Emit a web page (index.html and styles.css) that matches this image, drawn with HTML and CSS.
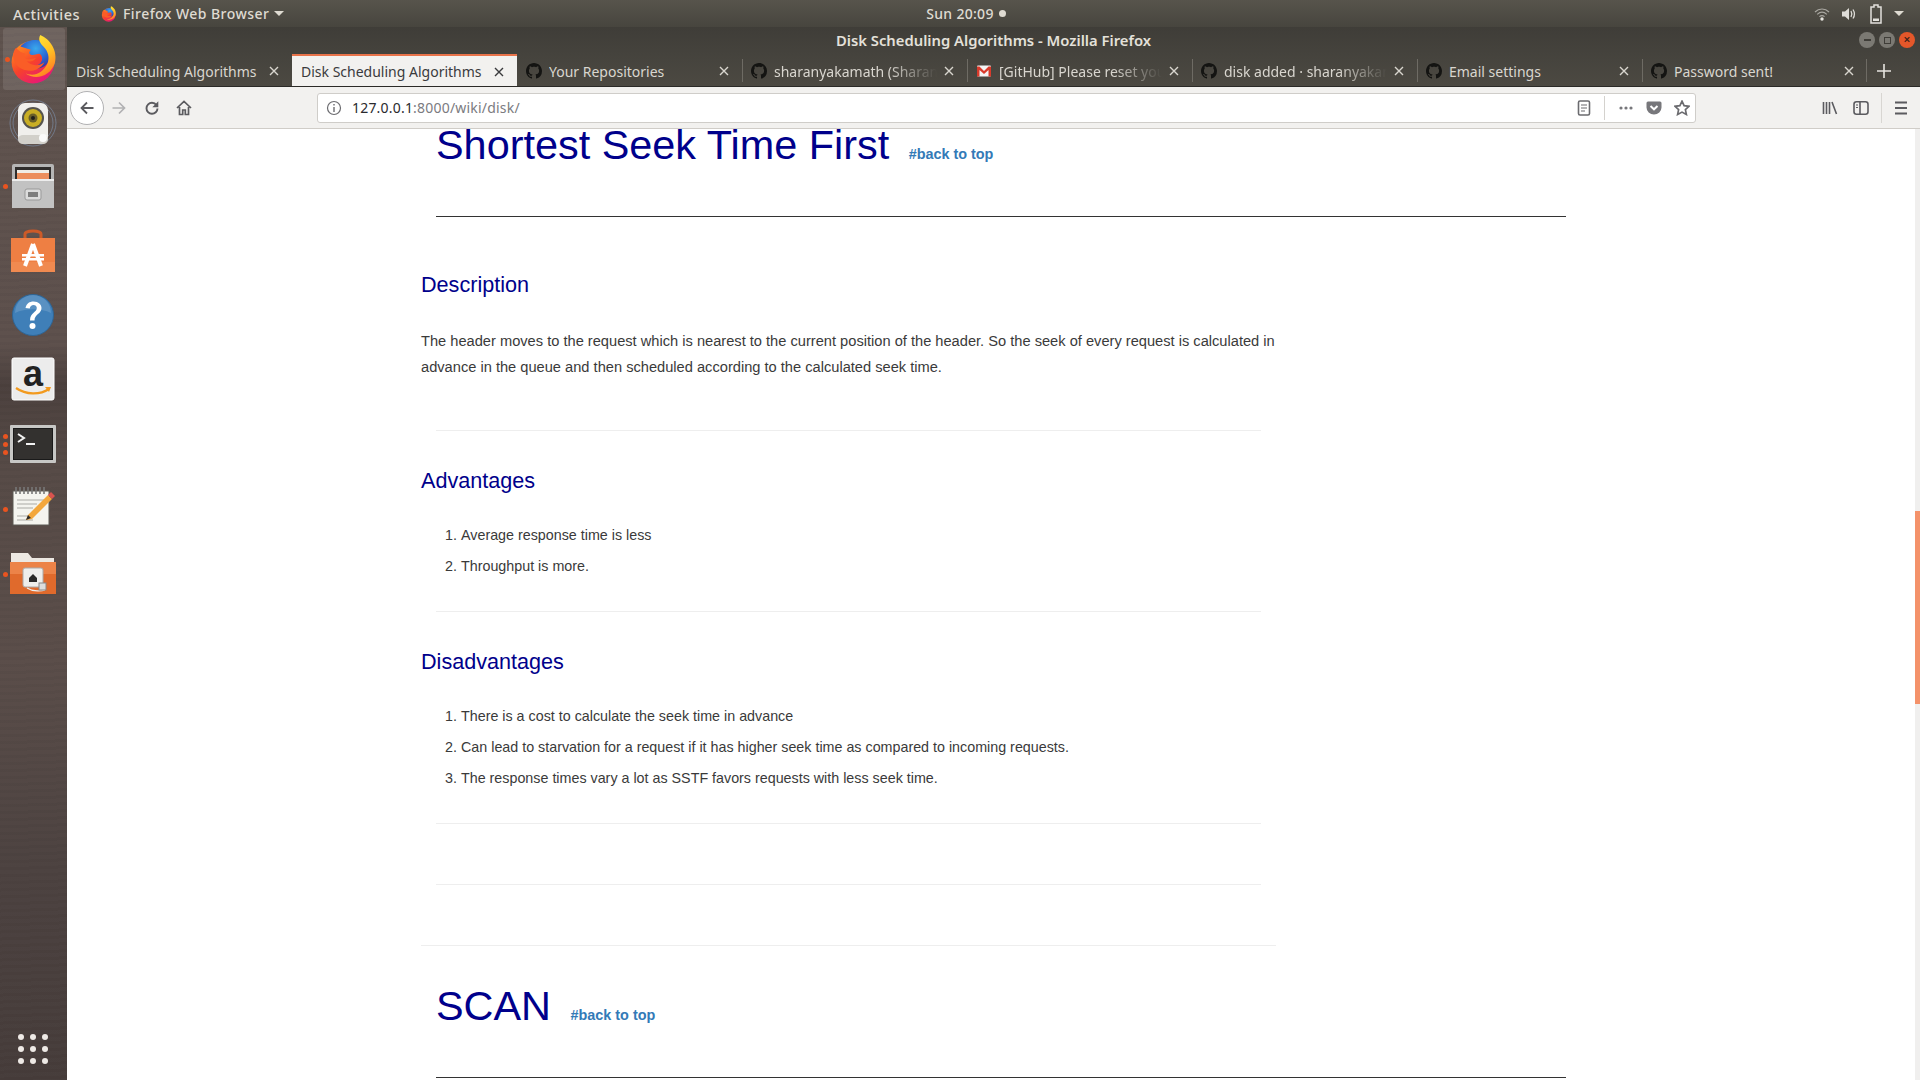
FILE: index.html
```html
<!DOCTYPE html>
<html lang="en">
<head>
<meta charset="utf-8">
<title>Disk Scheduling Algorithms</title>
<link rel="stylesheet" href="styles.css">
</head>
<body>
<svg class="defs" width="0" height="0" aria-hidden="true">
  <defs>
    <linearGradient id="ffBody" x1="0.1" y1="0.1" x2="0.7" y2="1">
      <stop offset="0" stop-color="#ff8f1f"/><stop offset="0.5" stop-color="#f7422b"/><stop offset="1" stop-color="#e6157c"/>
    </linearGradient>
    <linearGradient id="ffTail" x1="0.2" y1="0" x2="0.7" y2="1">
      <stop offset="0" stop-color="#ffea3a"/><stop offset="0.55" stop-color="#ffc025"/><stop offset="1" stop-color="#ff7a22"/>
    </linearGradient>
    <radialGradient id="ffGlobe" cx="0.5" cy="0.3" r="0.75">
      <stop offset="0" stop-color="#3aa9ec"/><stop offset="0.55" stop-color="#2a66d4"/><stop offset="1" stop-color="#3b2f9a"/>
    </radialGradient>
    <symbol id="firefox" viewBox="0 0 48 48">
      <circle cx="23" cy="27" r="20.500" fill="url(#ffBody)"/>
      <path d="M11 12c4-5 11-7 17-6 6 1 10 4 12 9 1 6-1 12-6 16-5 3-11 3-15 0 3 1 8 0 11-3 3-3 2-8-1-9-3 0-5 2-8 1-2-1-2-3 0-5l-4-1c-2-1-4-1-6-2z" fill="url(#ffGlobe)"/>
      <path d="M30 1c-2 4-1 7 3 11 5 5 6 11 4 16-3 7-9 11-15 11-2 0-4 0-6-1 10 7 24 2 28-10 3-11-4-23-14-27z" fill="url(#ffTail)"/>
      <path d="M7 13c2 4 6 5 9 6-2 2-2 4 1 5 3 1 6-1 9-1-2 3-6 4-9 3 4 5 12 5 17 1-3 6-10 9-16 8C9 34 4 27 4 21c0-3 1-6 3-8z" fill="#fa5d27"/>
    </symbol>
    <symbol id="gh" viewBox="0 0 16 16">
      <path fill="#141412" d="M8 0C3.58 0 0 3.58 0 8c0 3.54 2.29 6.53 5.47 7.59.4.07.55-.17.55-.38 0-.19-.01-.82-.01-1.49-2.01.37-2.53-.49-2.69-.94-.09-.23-.48-.94-.82-1.13-.28-.15-.68-.52-.01-.53.63-.01 1.08.58 1.23.82.72 1.21 1.87.87 2.33.66.07-.52.28-.87.51-1.07-1.78-.2-3.64-.89-3.64-3.95 0-.87.31-1.59.82-2.15-.08-.2-.36-1.02.08-2.12 0 0 .67-.21 2.2.82.64-.18 1.32-.27 2-.27.68 0 1.36.09 2 .27 1.53-1.04 2.2-.82 2.2-.82.44 1.1.16 1.92.08 2.12.51.56.82 1.27.82 2.15 0 3.07-1.87 3.75-3.65 3.95.29.25.54.73.54 1.48 0 1.07-.01 1.93-.01 2.2 0 .21.15.46.55.38A8.013 8.013 0 0016 8c0-4.42-3.58-8-8-8z"/>
    </symbol>
    <symbol id="tabx" viewBox="0 0 12 12">
      <path d="M2 2l8 8M10 2l-8 8" fill="none" stroke="currentColor" stroke-width="1.400"/>
    </symbol>
  </defs>
</svg>

<header class="topbar">
  <div class="top-left">
    <span class="activities">Activities</span>
    <span class="appmenu">
      <svg class="appicon" viewBox="0 0 48 48"><use href="#firefox"/></svg>
      Firefox Web Browser
      <span class="caret"></span>
    </span>
  </div>
  <div class="clock">Sun 20:09 <span class="clockdot"></span></div>
  <div class="tray">
    <svg class="tray-ico" viewBox="0 0 16 16"><path d="M1 6c4-4 10-4 14 0M3.200 8.400c3-2.700 6.600-2.700 9.600 0M5.400 10.600c1.600-1.300 3.600-1.300 5.200 0" fill="none" stroke="#a9a7a1" stroke-width="1.200"/><circle cx="8" cy="13" r="1.700" fill="#e6e4df"/></svg>
    <svg class="tray-ico" viewBox="0 0 16 16"><path d="M1 5.500h3L8 2v12L4 10.500H1z" fill="#dedcd7"/><path d="M10 5c1 1.800 1 4.200 0 6M12 3.500c1.800 2.800 1.800 6.200 0 9" fill="none" stroke="#dedcd7" stroke-width="1.300"/></svg>
    <svg class="tray-ico" viewBox="0 0 16 20"><path d="M6 1h4v2h3v16H3V3h3z" fill="none" stroke="#e2e0db" stroke-width="1.500"/><rect x="5" y="14.500" width="6" height="2.500" fill="#e2e0db"/></svg>
    <span class="caret tray-caret"></span>
  </div>
</header>

<div class="desktop">
  <nav class="dock">
    <div class="dock-item active"><span class="dots"><i></i></span>
      <svg class="dock-ico ff" viewBox="0 0 48 48"><use href="#firefox"/></svg></div>
    <div class="dock-item rhythm">
      <svg class="dock-ico" viewBox="0 0 48 48">
        <g fill="none" stroke="#7f94b0" stroke-opacity=".6"><circle cx="24" cy="24" r="23"/><circle cx="24" cy="24" r="20"/></g>
        <rect x="9" y="4" width="30" height="41" rx="7" fill="#f0efec"/>
        <rect x="9" y="36" width="30" height="9" rx="5" fill="#d2d0ca"/>
        <circle cx="24" cy="19" r="11" fill="#55534e"/><circle cx="24" cy="19" r="9" fill="#c9ae24"/><circle cx="24" cy="19" r="4.500" fill="#6a5f28"/><circle cx="24" cy="19" r="2" fill="#201f1b"/>
        <circle cx="34" cy="39" r="4" fill="#fafafa"/>
      </svg></div>
    <div class="dock-item files"><span class="dots"><i></i></span>
      <svg class="dock-ico" viewBox="0 0 48 48">
        <rect x="3" y="2" width="42" height="44" rx="2" fill="#b5b5b5"/>
        <rect x="6" y="5" width="36" height="15" fill="#2f2d2c"/>
        <rect x="8" y="8" width="32" height="9" fill="#f0ede6"/><rect x="8" y="11" width="32" height="6" fill="#ec8e5c"/>
        <rect x="3" y="17" width="42" height="29" fill="#c2c2c2"/><rect x="3" y="17" width="42" height="2" fill="#ededed"/>
        <rect x="16" y="27" width="16" height="11" rx="2" fill="#dcdcdc" stroke="#999"/><rect x="19" y="30" width="10" height="5" fill="#7e7e7e"/>
      </svg></div>
    <div class="dock-item soft">
      <svg class="dock-ico" viewBox="0 0 48 48">
        <path d="M16 13v-5c0-4 16-4 16 0v5" fill="none" stroke="#cc5a28" stroke-width="3"/>
        <path d="M2 12h44v34H2z" fill="#ee7f43"/><path d="M2 36h44v10H2z" fill="#f08a50"/>
        <path d="M24 18l-8 22M24 18l8 22" fill="none" stroke="#fff" stroke-width="4"/><path d="M13 28h22v2.500H13zM13 32h22v2.500H13z" fill="#fff"/>
      </svg></div>
    <div class="dock-item help">
      <svg class="dock-ico" viewBox="0 0 48 48">
        <circle cx="24" cy="24" r="20.500" fill="#3f7fb8" stroke="#2f6595"/><path d="M6 22a18 18 0 0136 0c-10-5-26-5-36 0z" fill="#fff" opacity=".14"/>
        <path d="M16.500 17c1-4.500 4-6.500 8-6.500 5 0 8 3 8 6.500 0 6-7 6-7 12.500h-4.500c0-8 6.800-8 6.800-12.500 0-1.800-1.500-3-3.300-3-2 0-3.300 1.200-3.800 3.500z" fill="#fff"/><circle cx="23.500" cy="35" r="3" fill="#fff"/>
      </svg></div>
    <div class="dock-item amazon">
      <svg class="dock-ico" viewBox="0 0 48 48">
        <rect x="3" y="2" width="42" height="42" rx="2" fill="#ececec" stroke="#fff"/>
        <text class="amz" x="24" y="30" text-anchor="middle">a</text>
        <path d="M7 32c10 7 24 7 33 1" fill="none" stroke="#f29a1f" stroke-width="2.200"/><path d="M36 31l6 0-2 5z" fill="#f29a1f"/>
      </svg></div>
    <div class="dock-item term"><span class="dots"><i></i><i></i><i></i></span>
      <svg class="dock-ico" viewBox="0 0 48 48">
        <rect x="1" y="4" width="46" height="38" rx="1" fill="#c7c7c5"/><rect x="4" y="7" width="40" height="32" fill="#1a1a1a"/><rect x="5" y="8" width="38" height="30" fill="#33312f"/>
        <path d="M9 13l6 4-6 4" fill="none" stroke="#f2f2f2" stroke-width="2"/><rect x="17" y="22" width="9" height="2" fill="#f2f2f2"/>
      </svg></div>
    <div class="dock-item editor"><span class="dots"><i></i></span>
      <svg class="dock-ico" viewBox="0 0 48 48">
        <rect x="4" y="7" width="36" height="34" fill="#f4f4ef" stroke="#5c5a55"/>
        <path d="M7 3v7M11 3v7M15 3v7M19 3v7M23 3v7M27 3v7M31 3v7M35 3v7" stroke="#777" stroke-width="1.600"/>
        <path d="M8 16h28M8 20h20M8 24h16M8 32h12M8 36h16" stroke="#a9a9a5" stroke-width="1.200"/>
        <path d="M17 36l2-5 20-20 4 4-20 20z" fill="#f3a73c"/><path d="M39 11l3-3 4 4-3 3z" fill="#d9534f"/><path d="M17 36l2-5 3 3z" fill="#2a2a2a"/>
      </svg></div>
    <div class="dock-item folder"><span class="dots"><i></i></span>
      <svg class="dock-ico" viewBox="0 0 48 48">
        <path d="M2 3h17l4 5h22v6H2z" fill="#ece8e2"/>
        <path d="M1 12h46v32H1z" fill="#e06a2c"/><path d="M1 12h46v12H1z" fill="#ec8348"/>
        <rect x="14" y="18" width="20" height="19" rx="2" fill="#eeeeec" stroke="#aaa"/><path d="M20 28l4-4 4 4v4h-8z" fill="#2a2a2a"/>
        <path d="M18 38c6 4 15 3 18 2" fill="none" stroke="#eee" stroke-width="1.200"/><rect x="30" y="33" width="7" height="7" fill="#ddd" stroke="#888"/>
      </svg></div>
    <div class="dock-grid"><i></i><i></i><i></i><i></i><i></i><i></i><i></i><i></i><i></i></div>
  </nav>

  <div class="window">
    <div class="titlebar">
      <span class="wintitle">Disk Scheduling Algorithms - Mozilla Firefox</span>
      <div class="winctl">
        <span class="wbtn"><i class="w-min"></i></span>
        <span class="wbtn"><i class="w-max"></i></span>
        <span class="wbtn close">×</span>
      </div>
    </div>

    <div class="tabstrip">
      <div class="tab first"><span class="tab-title">Disk Scheduling Algorithms</span><svg class="tab-x"><use href="#tabx"/></svg></div>
      <div class="tab current"><span class="tab-title">Disk Scheduling Algorithms</span><svg class="tab-x"><use href="#tabx"/></svg></div>
      <div class="tab"><svg class="fav"><use href="#gh"/></svg><span class="tab-title">Your Repositories</span><svg class="tab-x"><use href="#tabx"/></svg></div>
      <div class="tab sep"><svg class="fav"><use href="#gh"/></svg><span class="tab-title fade">sharanyakamath (Sharanya Kamath)</span><svg class="tab-x"><use href="#tabx"/></svg></div>
      <div class="tab sep"><svg class="fav" viewBox="0 0 16 16"><rect x="1" y="2.500" width="14" height="11" rx="1" fill="#f4f4f4"/><path d="M1 3.500h2.500L8 8l4.500-4.500H15v10h-2.500V7L8 11 3.500 7v6.500H1z" fill="#d93a2b"/></svg><span class="tab-title fade">[GitHub] Please reset your password</span><svg class="tab-x"><use href="#tabx"/></svg></div>
      <div class="tab sep"><svg class="fav"><use href="#gh"/></svg><span class="tab-title fade">disk added · sharanyakamath/Disk</span><svg class="tab-x"><use href="#tabx"/></svg></div>
      <div class="tab sep"><svg class="fav"><use href="#gh"/></svg><span class="tab-title">Email settings</span><svg class="tab-x"><use href="#tabx"/></svg></div>
      <div class="tab sep last"><svg class="fav"><use href="#gh"/></svg><span class="tab-title">Password sent!</span><svg class="tab-x"><use href="#tabx"/></svg></div>
      <svg class="newtab" viewBox="0 0 16 16"><path d="M8 1v14M1 8h14" stroke="#e6e4df" stroke-width="1.600"/></svg>
    </div>

    <div class="navbar">
      <span class="backbtn"><svg viewBox="0 0 16 16" class="nav16"><path d="M14.500 8H2.500M8 2.500L2.500 8 8 13.500" fill="none" stroke="#5b5b5f" stroke-width="1.800"/></svg></span>
      <svg viewBox="0 0 16 16" class="nav16 fwd"><path d="M1.500 8h12M8 2.500L13.500 8 8 13.500" fill="none" stroke="#b1b1b3" stroke-width="1.700"/></svg>
      <svg viewBox="0 0 16 16" class="nav16 reload"><path d="M13.500 8.500A5.500 5.500 0 118 2.800c2 0 3.500 1 4.500 2.500" fill="none" stroke="#5b5b5f" stroke-width="1.900"/><path d="M14.300 1.200v6h-6z" fill="#5b5b5f"/></svg>
      <svg viewBox="0 0 16 16" class="nav16 home"><path d="M1 8l7-6.500L15 8M3.500 7v7.500h3.200V10h2.600v4.500h3.200V7" fill="none" stroke="#5b5b5f" stroke-width="1.700"/></svg>
      <div class="urlbar">
        <svg viewBox="0 0 16 16" class="nav14"><circle cx="8" cy="8" r="6.500" fill="none" stroke="#6b6b6f" stroke-width="1.200"/><rect x="7.300" y="7" width="1.400" height="5" fill="#6b6b6f"/><rect x="7.300" y="4" width="1.400" height="1.500" fill="#6b6b6f"/></svg>
        <span class="url"><b>127.0.0.1</b>:8000/wiki/disk/</span>
        <svg viewBox="0 0 16 16" class="nav16 reader"><rect x="2.500" y="1" width="11" height="14" rx="1.500" fill="none" stroke="#6b6b6f" stroke-width="1.600"/><path d="M5 5h6M5 8h6M5 11h4" stroke="#6b6b6f" stroke-width="1.200"/></svg>
        <span class="urlsep"></span>
        <svg viewBox="0 0 16 16" class="nav16 more"><circle cx="3" cy="8" r="1.600" fill="#77777b"/><circle cx="8" cy="8" r="1.600" fill="#77777b"/><circle cx="13" cy="8" r="1.600" fill="#77777b"/></svg>
        <svg viewBox="0 0 16 16" class="nav16 pocket"><path d="M2 1.500h12a1.500 1.500 0 011.500 1.500v4.500a7.500 7 0 01-15 0V3A1.500 1.500 0 012 1.500z" fill="#77777b"/><path d="M4.500 6L8 9.300 11.500 6" fill="none" stroke="#fff" stroke-width="2"/></svg>
        <svg viewBox="0 0 16 16" class="nav16 star"><path d="M8 1.200l2.100 4.500 4.900.6-3.600 3.300 1 4.900L8 12.100l-4.400 2.400 1-4.900L1 6.300l4.900-.6z" fill="none" stroke="#6b6b6f" stroke-width="1.700"/></svg>
      </div>
      <svg viewBox="0 0 16 16" class="nav16 library"><path d="M1.500 2v12M4.500 2v12M7.500 2v12M10 2l4.500 12" fill="none" stroke="#5b5b5f" stroke-width="1.600"/></svg>
      <svg viewBox="0 0 16 16" class="nav16 sidebar"><rect x="1" y="1.800" width="14" height="12.400" rx="2.500" fill="none" stroke="#5b5b5f" stroke-width="1.600"/><path d="M7 2v12" stroke="#5b5b5f" stroke-width="1.600"/><path d="M3 5h2M3 7.500h2" stroke="#5b5b5f"/></svg>
      <span class="navsep"></span>
      <svg viewBox="0 0 16 16" class="nav16 burger"><path d="M2 2.500h12M2 8h12M2 13.500h12" stroke="#5b5b5f" stroke-width="1.900"/></svg>
    </div>

    <main class="page">
      <article class="article">
        <div class="algo-head first-head">
          <h1 class="algo-title">Shortest Seek Time First <a class="top-link">#back to top</a></h1>
          <hr class="rule-dark">
        </div>

        <h3 class="sub sub-desc">Description</h3>
        <p class="desc">The header moves to the request which is nearest to the current position of the header. So the seek of every request is calculated in advance in the queue and then scheduled according to the calculated seek time.</p>
        <hr class="rule-in r1">

        <h3 class="sub">Advantages</h3>
        <ol class="points">
          <li>Average response time is less</li>
          <li>Throughput is more.</li>
        </ol>
        <hr class="rule-in r2">

        <h3 class="sub">Disadvantages</h3>
        <ol class="points">
          <li>There is a cost to calculate the seek time in advance</li>
          <li>Can lead to starvation for a request if it has higher seek time as compared to incoming requests.</li>
          <li>The response times vary a lot as SSTF favors requests with less seek time.</li>
        </ol>
        <hr class="rule-in r3">
        <hr class="rule-in r4">
        <hr class="rule-out">

        <div class="algo-head scan-head">
          <h1 class="algo-title">SCAN <a class="top-link">#back to top</a></h1>
          <hr class="rule-dark">
        </div>
      </article>
      <div class="scrolltrack"><div class="scrollthumb"></div></div>
    </main>
  </div>
</div>
</body>
</html>
```
FILE: styles.css
```css
* { box-sizing: border-box; }
html, body { margin: 0; height: 100%; overflow: hidden; }
body { display: flex; flex-direction: column; width: 1920px; height: 1080px; font-family: "Noto Sans", sans-serif; background: #fff; }
.defs { position: absolute; }

/* GNOME top bar */
.topbar { height: 27px; flex: none; display: grid; grid-template-columns: 1fr auto 1fr; align-items: center; background: linear-gradient(#57544c, #47453e); color: #dfdbd2; font-size: 14px; font-weight: 500; }
.top-left { display: flex; align-items: center; }
.activities { margin-left: 13px; font-size: 14.500px; letter-spacing: .45px; }
.appmenu { display: flex; align-items: center; margin-left: 21px; letter-spacing: .45px; }
.appicon { width: 16px; height: 16px; margin-right: 6px; }
.caret { display: inline-block; width: 0; height: 0; border: 5px solid transparent; border-top: 5px solid #dfdbd2; border-bottom: 0; margin-left: 5px; }
.clock { display: flex; align-items: center; gap: 5px; font-size: 14px; margin-left: 12px; letter-spacing: .3px; }
.clockdot { width: 7px; height: 7px; border-radius: 50%; background: #dfdbd2; }
.tray { display: flex; align-items: center; justify-content: flex-end; padding-right: 16px; }
.tray-ico { width: 16px; height: 16px; margin-right: 11px; position: relative; left: 3px; }
.tray-ico:nth-child(3) { height: 20px; margin-right: 7px; }
.tray-caret { margin-left: 6px; }

.desktop { flex: 1; display: flex; min-height: 0; }

/* Ubuntu dock */
.dock { width: 67px; flex: none; display: flex; flex-direction: column; align-items: center; padding-right: 1px; background:
  repeating-linear-gradient(178deg, rgba(0,0,0,.018) 0 3px, rgba(255,255,255,.008) 3px 7px),
  linear-gradient(#5f534e 0, #5d504c 30%, #4b403d 34%, #564a46 42%, #5a4d49 60%, #4c4240 80%, #463c3a 100%); position: relative; }
.dock-item { width: 66px; height: 64.700px; flex: none; display: flex; align-items: center; justify-content: center; position: relative; }
.dock-item.active { background: rgba(255,255,255,.1); width: 62px; height: 62px; margin-top: 1px; margin-bottom: -1px; margin-left: 1px; border-radius: 3px; }
.dock-ico { width: 48px; height: 48px; }
.dock-ico.ff { width: 50px; height: 50px; }
.rhythm .dock-ico { margin-top: 4px; }
.soft .dock-ico { margin-top: -2px; }
.editor .dock-ico { margin-top: -2px; }
.dots { position: absolute; left: 3px; top: 0; bottom: 0; display: flex; flex-direction: column; justify-content: center; gap: 3px; }
.dots i { width: 5px; height: 5px; border-radius: 50%; background: #e95420; }
.active .dots { left: 2px; }
.amz { font: 700 36px "Liberation Sans", sans-serif; fill: #222; }
.dock-grid { margin-top: auto; margin-bottom: 16px; display: grid; grid-template-columns: repeat(3, 6px); gap: 6px 6px; }
.dock-grid i { width: 6px; height: 6px; border-radius: 50%; background: #eeeae6; }

/* Firefox window */
.window { flex: 1; min-width: 0; display: flex; flex-direction: column; }
.titlebar { height: 28px; flex: none; display: flex; align-items: center; justify-content: center; position: relative; padding-bottom: 2px; background: linear-gradient(#3f3d38, #45433d); color: #e4e1da; font-size: 14.800px; font-weight: 600; }
.winctl { position: absolute; right: 5px; top: 5px; display: flex; gap: 4px; }
.wbtn { width: 16px; height: 16px; border-radius: 50%; background: #7b7973; display: flex; align-items: center; justify-content: center; color: #3a2018; font-size: 12px; line-height: 1; }
.wbtn.close { background: #e4572a; }
.w-min { width: 7px; height: 1.500px; background: #3f3d38; }
.w-max { width: 7px; height: 7px; border: 1px solid #3f3d38; }

.tabstrip { height: 32px; flex: none; display: flex; background: linear-gradient(#45433d, #4c4942); border-bottom: 1px solid #2b2a27; }
.tab { width: 225px; height: 31px; flex: none; display: flex; align-items: center; padding: 1px 12px 0 9px; color: #d9d6cf; font-size: 14px; position: relative; }
.tab.sep::before { content: ""; position: absolute; left: 0; top: 4px; bottom: 4px; width: 1px; background: #6e6b64; }
.tab.current { background: #f2f1ef; color: #3a3a3d; height: 32px; border-top: 2px solid #e8734a; margin-top: -1px; padding-top: 1px; }
.tab-title { flex: 1; min-width: 0; white-space: nowrap; overflow: hidden; }
.tab-title.fade { -webkit-mask-image: linear-gradient(90deg, #000 70%, transparent 100%); mask-image: linear-gradient(90deg, #000 70%, transparent 100%); }
.tab-x { width: 12px; height: 12px; flex: none; margin-left: 6px; color: #d9d6cf; }
.current .tab-x { color: #3a3a3d; }
.fav { width: 16px; height: 16px; flex: none; margin-right: 7px; }
.last::after { content: ""; position: absolute; right: 0; top: 4px; bottom: 4px; width: 1px; background: #6e6b64; }
.newtab { width: 16px; height: 16px; align-self: center; margin-left: 9px; }

/* Toolbar */
.navbar { height: 42px; flex: none; display: flex; align-items: center; background: #f2f1ef; border-bottom: 1px solid #d0cdc8; position: relative; }
.backbtn { width: 34px; height: 34px; border-radius: 50%; background: #fff; border: 1px solid #b1b1b3; margin-left: 3px; display: flex; align-items: center; justify-content: center; flex: none; }
.nav16 { width: 16px; height: 16px; flex: none; }
.nav14 { width: 16px; height: 16px; flex: none; }
.fwd { margin-left: 7px; }
.reload { margin-left: 17px; }
.home { margin-left: 16px; }
.urlbar { width: 1379px; height: 30px; margin-left: 125px; background: #fff; border: 1px solid #cfcdc9; border-radius: 3px; display: flex; align-items: center; padding: 0 5px 0 8px; flex: none; }
.url { flex: 1; margin-left: 10px; font-size: 14px; letter-spacing: .2px; color: #7b7b7f; white-space: nowrap; }
.url b { font-weight: 400; color: #2a2a2e; }
.urlsep { width: 1px; height: 24px; background: #d4d2ce; margin: 0 0 0 12px; }
.more { margin-left: 13px; }
.pocket { margin-left: 12px; }
.star { margin-left: 12px; }
.library { margin-left: 126px; }
.sidebar { margin-left: 15px; }
.navsep { width: 1px; height: 30px; background: #d8d6d2; margin-left: 12px; }
.burger { margin-left: 11px; }

/* Page */
.page { flex: 1; min-height: 0; position: relative; overflow: hidden; background: #fff; font-family: "Liberation Sans", Arial, sans-serif; font-size: 14px; color: #3a3a3a; }
.article { width: 855px; margin-left: 354px; }
.algo-head { width: 1130px; margin-left: 15px; }
.first-head { margin-top: -6px; }
.algo-title { margin: 0; font-size: 41.400px; font-weight: 400; line-height: 44px; color: #00008b; }
.top-link { font-size: 14.400px; font-weight: 700; color: #337ab7; margin-left: 8px; }
.rule-dark { margin: 40px 0 0; border: 0; border-top: 1px solid #333; }
.sub { margin: 0; font-size: 21.600px; font-weight: 400; line-height: 24px; color: #00008b; }
.sub-desc { margin-top: 56px; }
.desc { margin: 31px 0 0; line-height: 26px; font-size: 14.650px; }
.rule-in { border: 0; border-top: 1px solid #eee; margin: 0 15px; }
.r1 { margin-top: 50px; margin-bottom: 38px; }
.r2 { margin-top: 32px; margin-bottom: 38px; }
.r3 { margin-top: 32px; }
.r4 { margin-top: 60px; }
.rule-out { border: 0; border-top: 1px solid #eee; margin: 60px 0 0; }
.points { margin: 29px 0 0; padding-left: 40px; font-size: 14.300px; }
.points li { line-height: 26px; margin-bottom: 5px; }
.scan-head { margin-top: 38px; }
.scrolltrack { position: absolute; right: 0; top: 0; bottom: 0; width: 5px; background: #f0efee; }
.scrollthumb { margin-top: 382px; height: 193px; background: #f4926a; }
```
